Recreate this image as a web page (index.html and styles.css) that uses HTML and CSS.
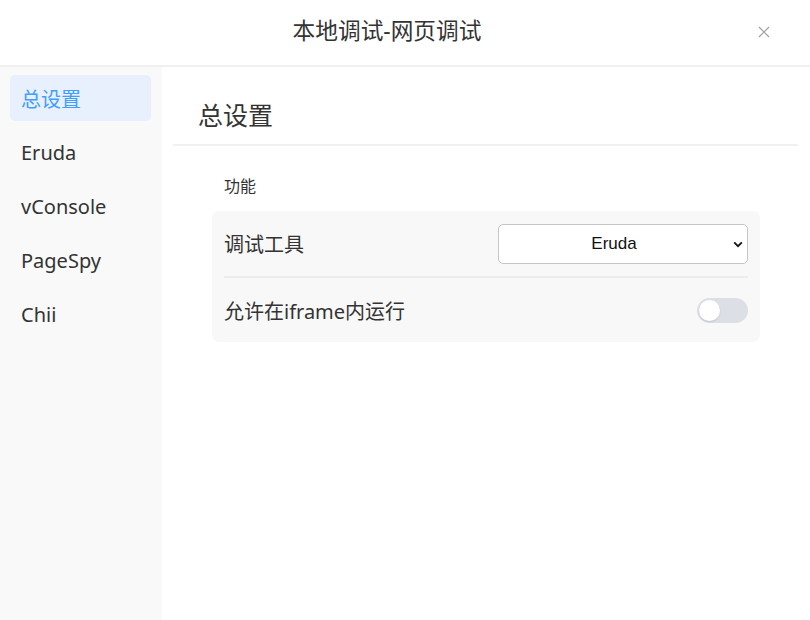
FILE: index.html
```html
<!DOCTYPE html>
<html lang="zh">
<head>
<meta charset="utf-8">
<title>本地调试-网页调试</title>
<link rel="stylesheet" href="styles.css">
</head>
<body>
<div class="dialog">
  <header class="header">
    <h1 class="title">本地调试-网页调试</h1>
    <button class="close" aria-label="关闭">
      <svg width="12" height="12" viewBox="0 0 12 12"><path d="M1 1L11 11M11 1L1 11" stroke="#a0a0a0" stroke-width="1.2" fill="none"/></svg>
    </button>
  </header>
  <div class="body">
    <nav class="sidebar">
      <div class="nav-item active">总设置</div>
      <div class="nav-item">Eruda</div>
      <div class="nav-item">vConsole</div>
      <div class="nav-item">PageSpy</div>
      <div class="nav-item">Chii</div>
    </nav>
    <main class="main">
      <h2 class="page-title">总设置</h2>
      <section class="section">
        <div class="section-label">功能</div>
        <div class="card">
          <div class="row">
            <span class="row-label">调试工具</span>
            <div class="select-wrap">
              <select class="select">
                <option>Eruda</option>
                <option>vConsole</option>
                <option>PageSpy</option>
                <option>Chii</option>
              </select>
              <svg class="chev" width="10" height="7" viewBox="0 0 10 7"><path d="M1.2 1.4L5 5.2L8.8 1.4" stroke="#111" stroke-width="1.8" fill="none"/></svg>
            </div>
          </div>
          <div class="row">
            <span class="row-label">允许在iframe内运行</span>
            <span class="toggle"><span class="knob"></span></span>
          </div>
        </div>
      </section>
    </main>
  </div>
</div>
</body>
</html>
```
FILE: styles.css
```css
* { box-sizing: border-box; }
html, body { margin: 0; padding: 0; }
body {
  width: 810px;
  height: 620px;
  overflow: hidden;
  font-family: "Noto Sans", "Noto Sans CJK SC", sans-serif;
  color: #333;
  background: #fff;
}
.dialog {
  display: flex;
  flex-direction: column;
  height: 620px;
}
.header {
  height: 67px;
  flex: none;
  display: flex;
  align-items: center;
  justify-content: center;
  position: relative;
  border-bottom: 2px solid #f0f0f0;
  padding-right: 36px;
}
.title {
  margin: 0;
  font-size: 22.7px;
  font-weight: 400;
  color: #333;
  line-height: 1;
  padding-bottom: 2px;
}
.close {
  position: absolute;
  right: 40px;
  top: 26px;
  width: 12px;
  height: 12px;
  padding: 0;
  border: 0;
  background: none;
  display: flex;
}
.body {
  flex: 1;
  display: flex;
  min-height: 0;
}
.sidebar {
  width: 162px;
  flex: none;
  background: #f9f9f9;
  padding: 8px 11px 0 10px;
  display: flex;
  flex-direction: column;
  gap: 8px;
}
.nav-item {
  height: 46px;
  display: flex;
  align-items: center;
  padding-left: 11px;
  font-size: 20px;
  color: #333;
  border-radius: 5px;
}
.nav-item.active {
  background: #e7f0fc;
  color: #409eff;
}
.main {
  flex: 1;
  padding: 0 12px 0 11px;
}
.page-title {
  margin: 0;
  height: 79px;
  display: flex;
  align-items: center;
  padding: 16px 0 0 25px;
  font-size: 25px;
  font-weight: 400;
  color: #333;
  border-bottom: 2px solid #f0f0f0;
}
.section {
  padding: 26px 38px 0 39px;
}
.section-label {
  font-size: 16px;
  line-height: 28px;
  padding-left: 12px;
  color: #333;
  margin-bottom: 11px;
}
.card {
  background: #f8f8f8;
  border-radius: 7px;
  padding: 0 12px;
}
.row {
  height: 65px;
  display: flex;
  align-items: center;
  justify-content: space-between;
  font-size: 20px;
}
.row + .row {
  border-top: 2px solid #ececec;
  height: 66px;
}
.row-label { color: #333; }
.select-wrap {
  position: relative;
  width: 250px;
  height: 40px;
}
.select {
  appearance: none;
  -webkit-appearance: none;
  width: 100%;
  height: 100%;
  border: 1px solid #c6c6c6;
  border-radius: 5px;
  background: #fff;
  font-family: "Liberation Sans", Arial, sans-serif;
  font-size: 17px;
  color: #111;
  text-align: center;
  text-align-last: center;
  padding: 0 18px 0 0;
  margin: 0;
}
.chev {
  position: absolute;
  right: 5px;
  top: 17px;
  pointer-events: none;
}
.toggle {
  width: 51px;
  height: 25px;
  border-radius: 13px;
  background: #dcdfe6;
  display: flex;
  align-items: center;
  padding: 0 2px;
}
.knob {
  width: 21px;
  height: 21px;
  border-radius: 50%;
  background: #fff;
  box-shadow: 0 1px 2px rgba(0,0,0,0.12);
}
```
